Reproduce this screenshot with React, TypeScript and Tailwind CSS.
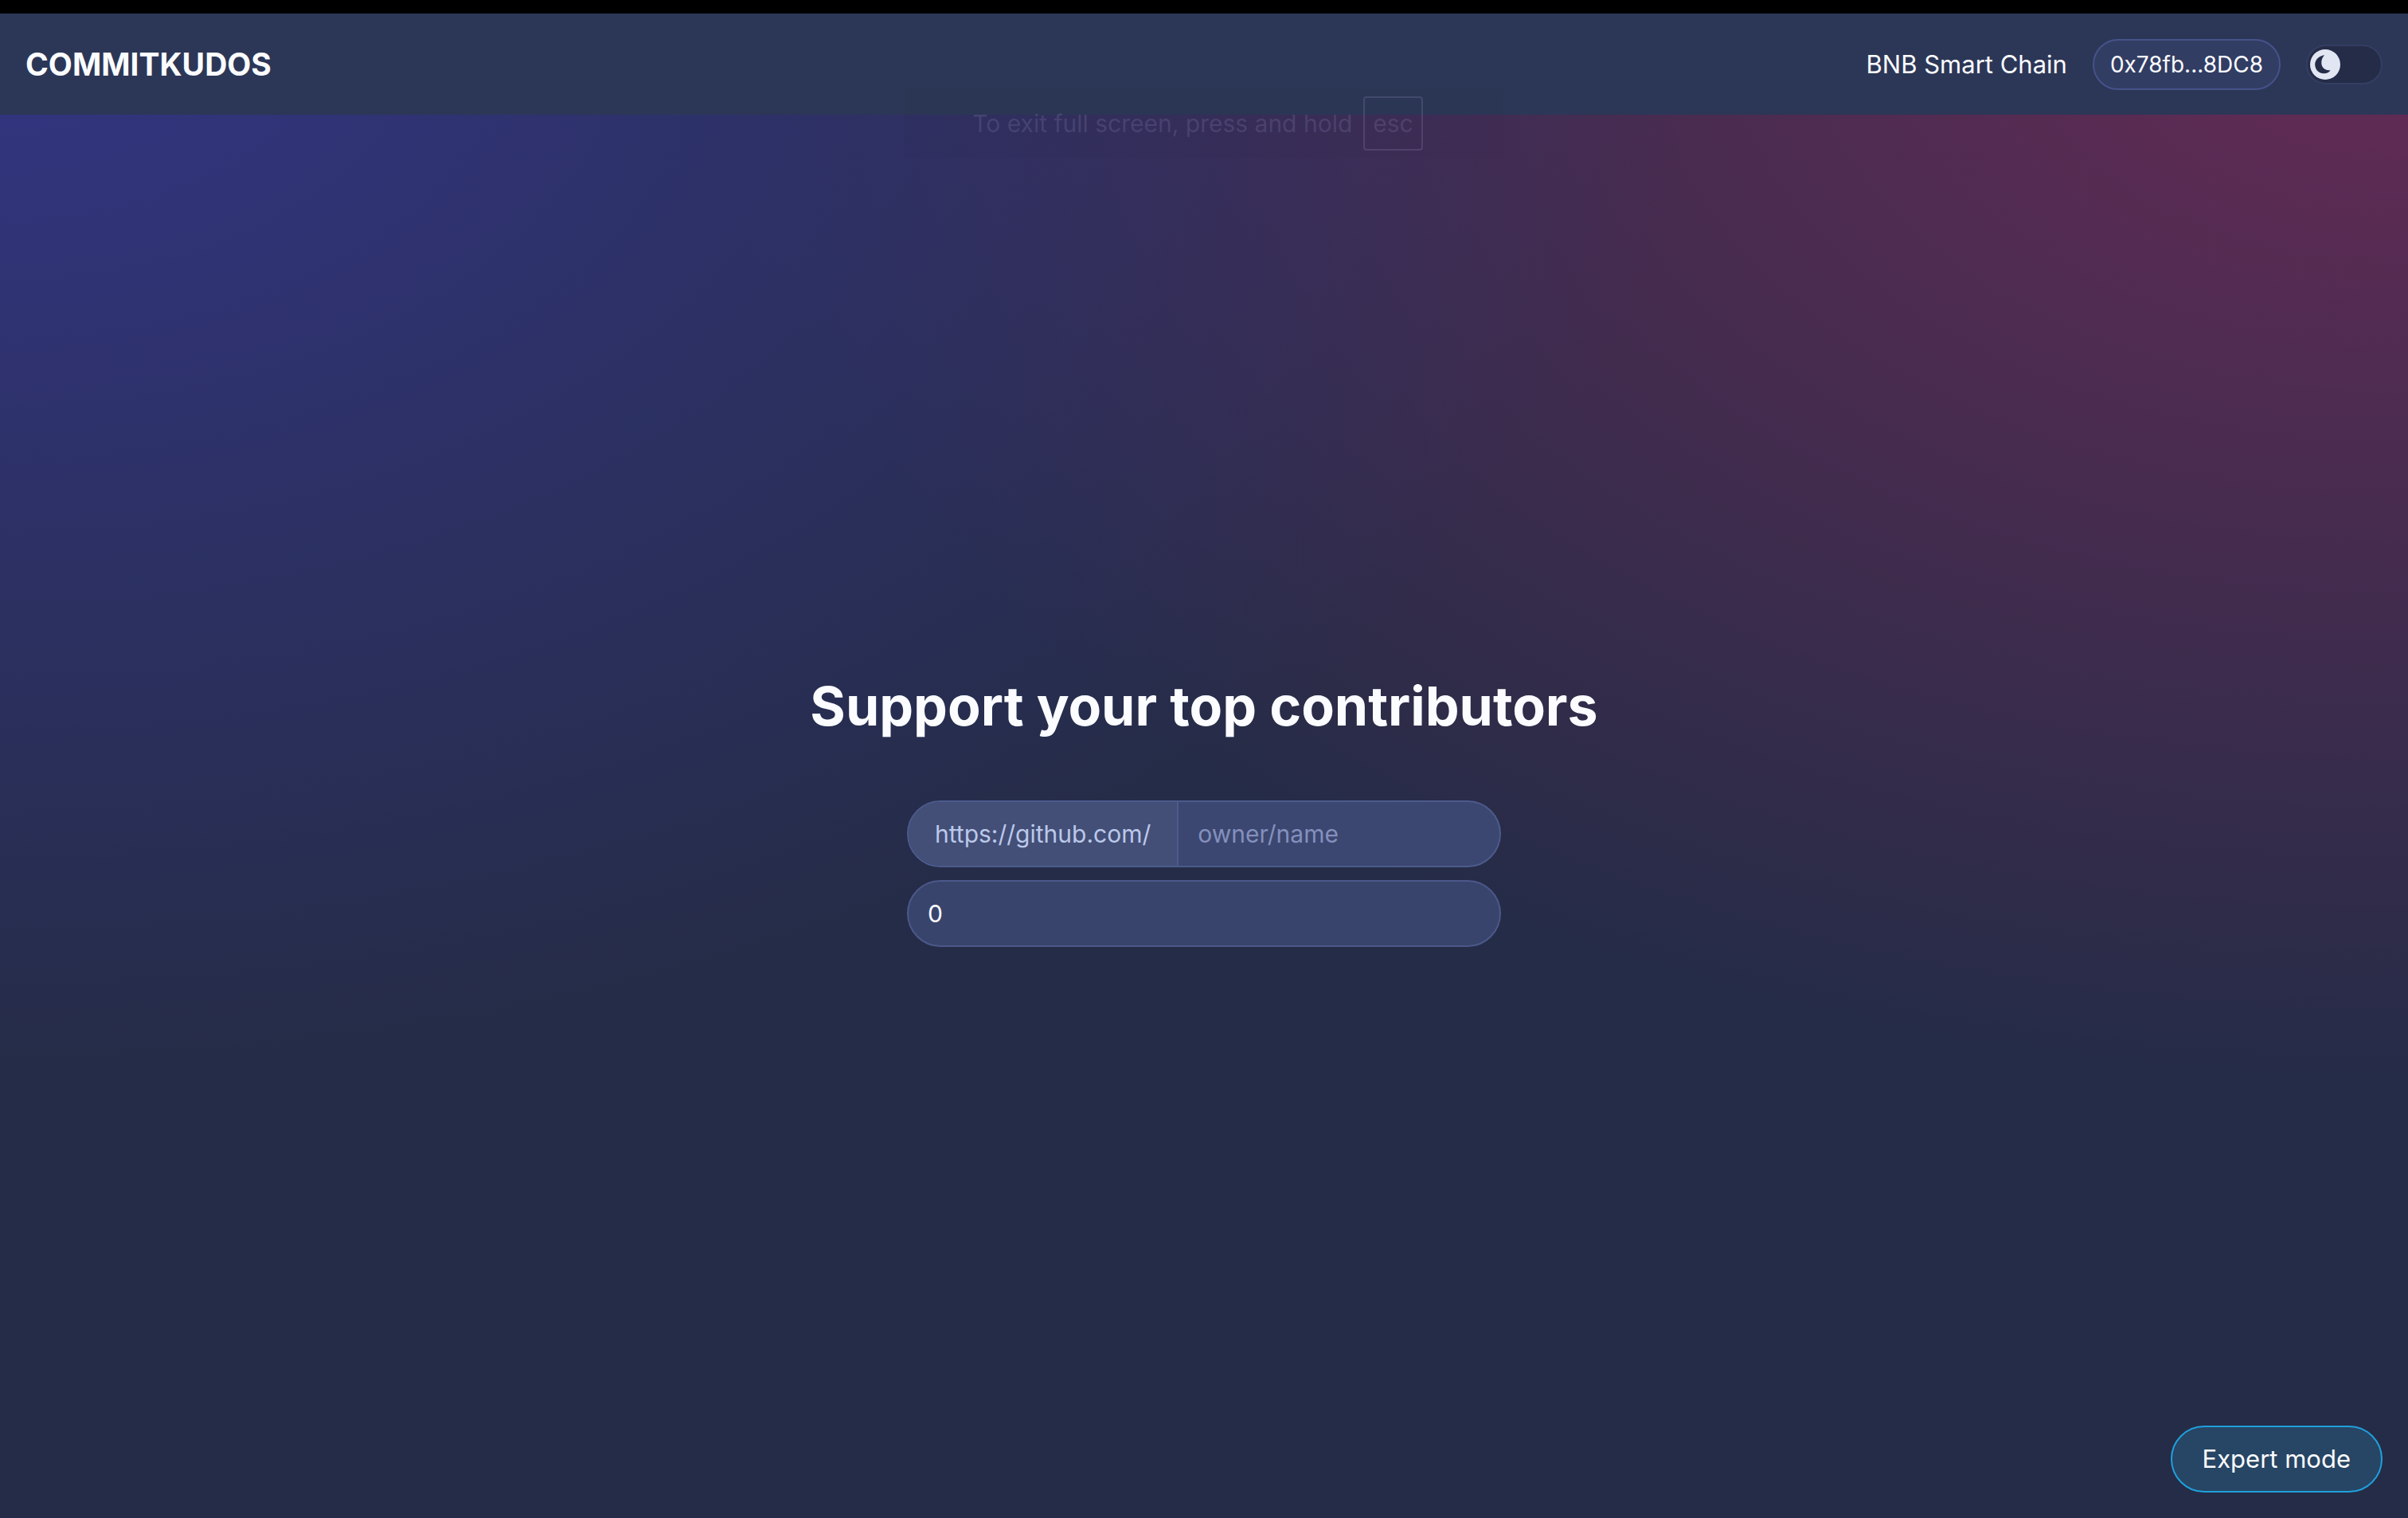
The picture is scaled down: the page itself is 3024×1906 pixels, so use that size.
import React, { useState } from "react";

function FullScreenHint() {
  return (
    <div className="pointer-events-none absolute top-[95px] left-1/2 flex h-[86px] w-[752px] -translate-x-1/2 items-center justify-center gap-3.5 rounded-sm bg-black/1 pr-4 text-[30px] leading-10 text-[#a09cc8]/20">
      <span className="whitespace-nowrap">To exit full screen, press and hold</span>
      <kbd className="flex h-[68px] items-center rounded-sm border-2 border-[#a09cc8]/20 px-2.5 font-[Inter,sans-serif]">
        esc
      </kbd>
    </div>
  );
}

function ThemeSwitch({ dark, onChange }: { dark: boolean; onChange: (dark: boolean) => void }) {
  return (
    <button
      type="button"
      role="switch"
      aria-checked={dark}
      aria-label="Dark theme"
      onClick={() => onChange(!dark)}
      className="flex h-[50px] w-24 items-center rounded-full border-2 border-[#343e62] bg-[#252c48] px-[3px]"
    >
      <svg viewBox="0 0 38 38" className="size-[38px]" aria-hidden="true">
        <circle cx="19" cy="19" r="19" fill="#e2e6f3" />
        <path
          d="M18.2 7.2C10.5 8.2 6 13.5 6.2 19.3C6.4 26 11.6 30.4 17.4 30.3C21 30.2 24 28.7 25.6 26.2C19.5 27.2 14.6 23.2 14.3 17.6C14.1 13.4 15.6 9.7 18.2 7.2Z"
          fill="#252c48"
        />
      </svg>
    </button>
  );
}

function Header() {
  const [dark, setDark] = useState(true);
  return (
    <header className="flex h-[127px] items-center justify-between bg-[#2c3757] px-8">
      <h2 className="text-[39px] leading-12 font-bold">COMMITKUDOS</h2>
      <div className="flex items-center gap-8">
        <span className="text-[31px] leading-10">BNB Smart Chain</span>
        <button
          type="button"
          className="flex h-16 items-center rounded-full border-2 border-[#46528a] bg-[#323d63] px-5 text-[28px] leading-10"
        >
          0x78fb...8DC8
        </button>
        <ThemeSwitch dark={dark} onChange={setDark} />
      </div>
    </header>
  );
}

function SupportForm() {
  const [repo, setRepo] = useState("");
  const [amount, setAmount] = useState("0");
  return (
    <form className="flex w-[746px] flex-col gap-4 text-[30px] leading-10" onSubmit={(e) => e.preventDefault()}>
      <div className="flex h-[84px] overflow-hidden rounded-full border-2 border-[#4c5b8c] bg-[#3b4770]">
        <label
          htmlFor="repo"
          className="flex shrink-0 items-center border-r-2 border-[#4c5b8c] bg-[#434f77] px-[33px] text-[#bcc8ea]"
        >
          https://github.com/
        </label>
        <input
          id="repo"
          value={repo}
          onChange={(e) => setRepo(e.target.value)}
          placeholder="owner/name"
          className="min-w-0 flex-1 bg-transparent px-6 outline-none placeholder:text-[#8490bd]"
        />
      </div>
      <input
        aria-label="Amount"
        inputMode="decimal"
        value={amount}
        onChange={(e) => setAmount(e.target.value)}
        className="h-[84px] rounded-full border-2 border-[#4c588a] bg-[#39446c] px-6 outline-none"
      />
    </form>
  );
}

export default function App() {
  return (
    <div className="relative flex min-h-screen flex-col border-t-[17px] border-black bg-[#252c47] bg-[radial-gradient(ellipse_at_top_left,#333582_0%,transparent_50%),radial-gradient(ellipse_at_top_right,#652b56_0%,transparent_50%)] font-[Inter,sans-serif] text-[#fbfcff]">
      <Header />
      <main className="flex flex-1 flex-col items-center gap-[77px] pt-[700px]">
        <h1 className="text-[68px] leading-[84px] font-bold">Support your top contributors</h1>
        <SupportForm />
      </main>
      <footer className="flex justify-end p-8">
        <button
          type="button"
          className="h-[84px] rounded-full border-2 border-[#1fa0dc] bg-[#274564] px-[38px] text-[31px] leading-10"
        >
          Expert mode
        </button>
      </footer>
      <FullScreenHint />
    </div>
  );
}
